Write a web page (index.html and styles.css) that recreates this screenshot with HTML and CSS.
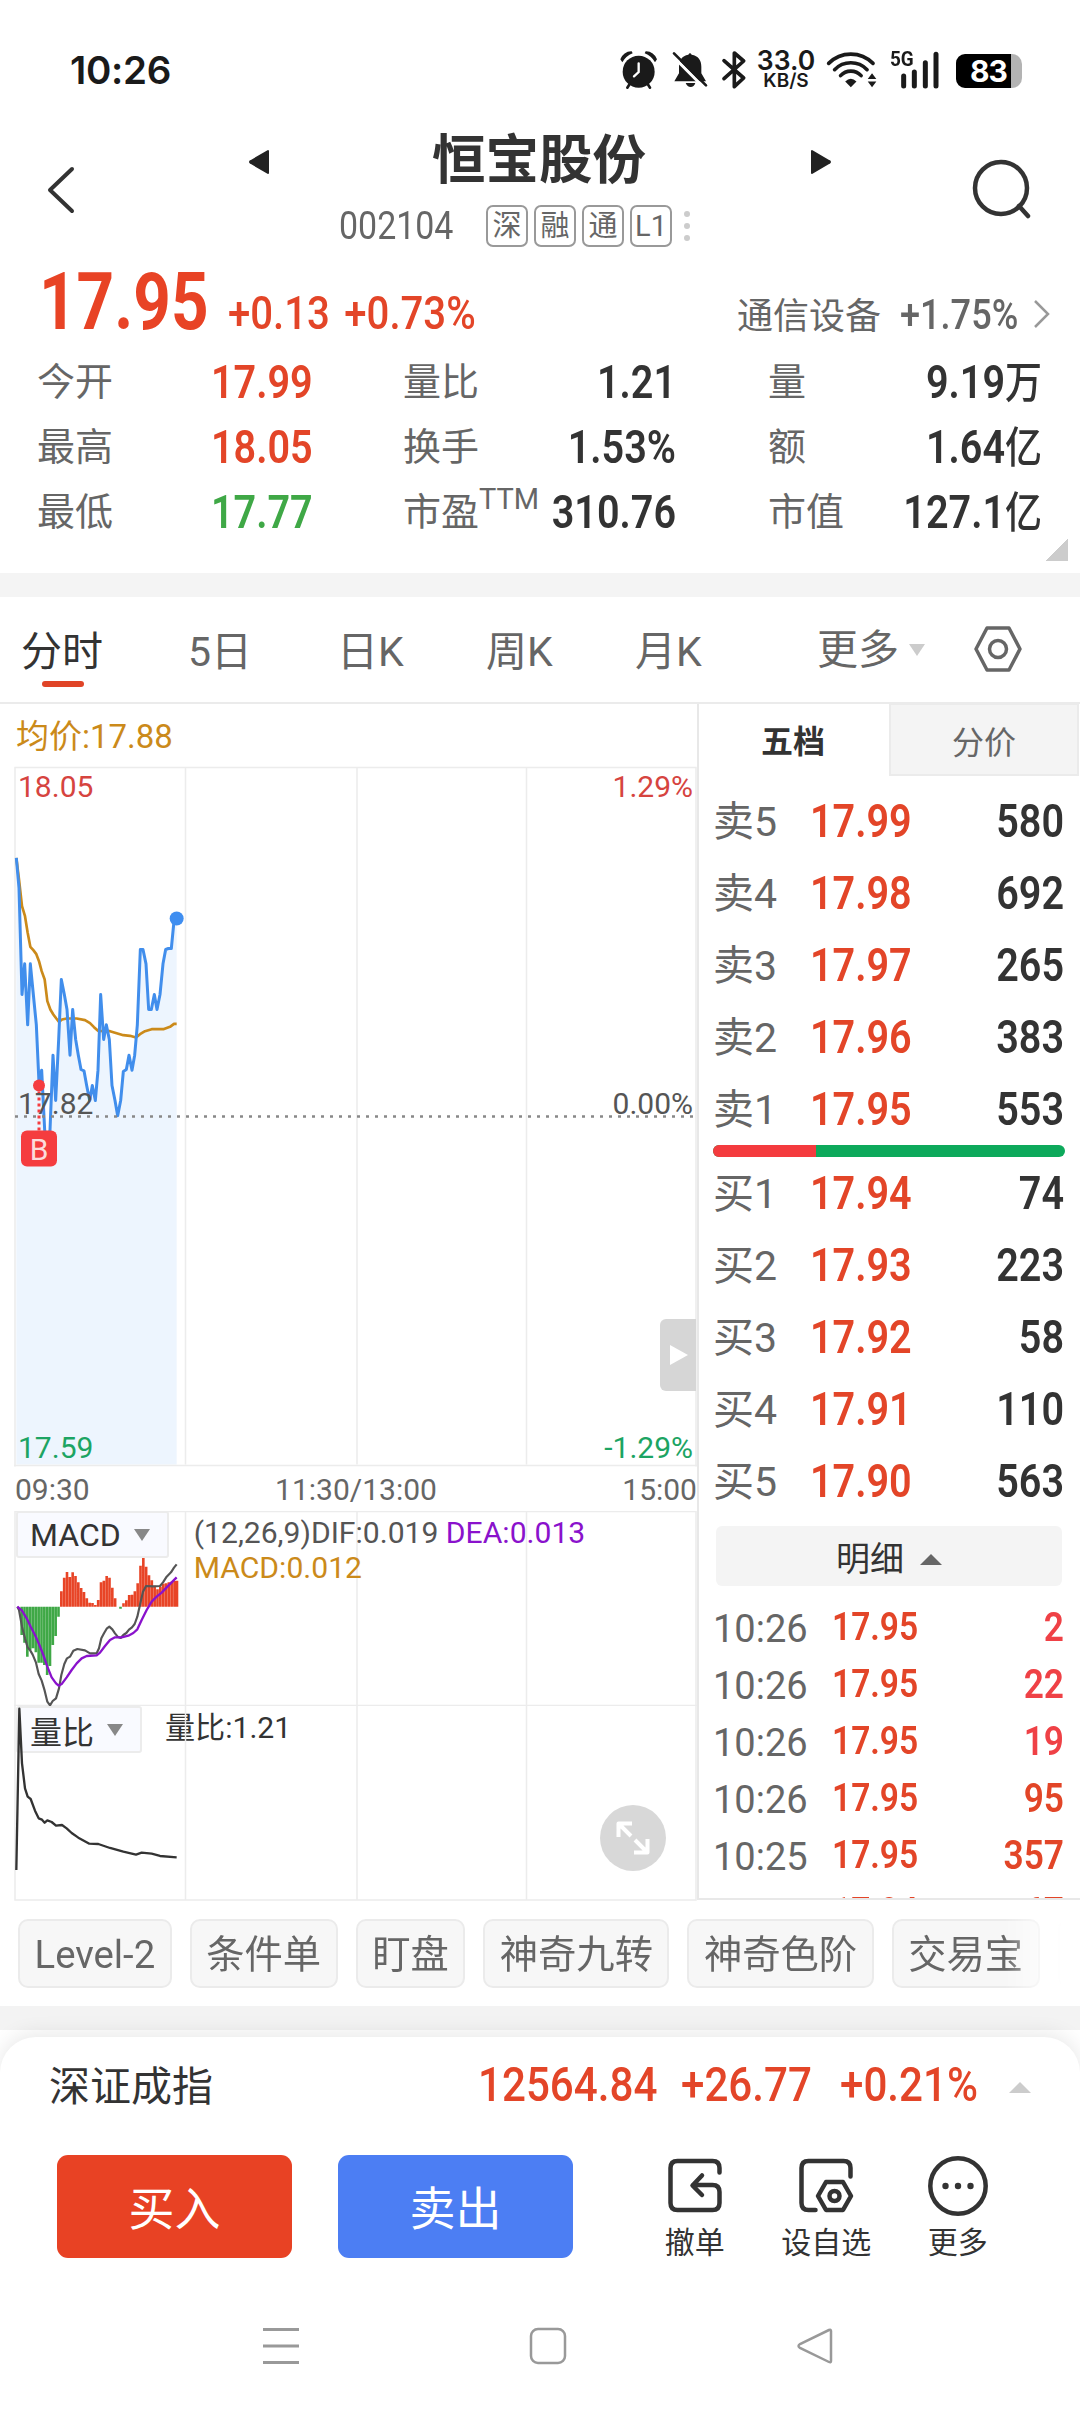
FILE: index.html
```html
<!DOCTYPE html>
<html lang="zh-CN">
<head>
    <meta charset="UTF-8">
    <meta name="viewport" content="width=device-width, initial-scale=1.0">
    <title>恒宝股份 002104</title>
    <link rel="stylesheet" href="styles.css">
</head>
<body>
    <!-- Status bar -->
    <div class="status-bar">
        <span class="clock">10:26</span>
        <div class="status-icons">
            <svg class="st-alarm" viewBox="24 27 120 123">
                <circle cx="83" cy="95" r="48"/>
                <path d="M28 58a34 34 0 0 1 34-24l3 6a62 62 0 0 0-31 27zM138 58a34 34 0 0 0-34-24l-3 6a62 62 0 0 1 31 27z"/>
                <path class="st-line" d="M56 132l-7 11M110 132l7 11"/>
                <path d="M83 70v26l-14 13" stroke="#fff" stroke-width="7" fill="none" stroke-linecap="round"/>
            </svg>
            <svg class="st-bell" viewBox="180 27 114 123">
                <path d="M232 44q5-8 10 0c20 3 29 17 29 36v20l14 24h-95l14-24V80c0-19 9-33 28-36z"/>
                <path d="M224 129h29q-4 12-14 12t-15-12z"/>
                <path d="M183 46l97 98" stroke="#fff" stroke-width="9"/>
                <path class="st-line" d="M189 40l96 96"/>
            </svg>
            <svg class="st-bt" viewBox="330 27 78 123">
                <path d="M339 62l59 52-28 26V39l28 24-59 53" fill="none" stroke="#1a1a1a" stroke-width="11" stroke-linejoin="round" stroke-linecap="round"/>
            </svg>
            <div class="net-speed"><b>33.0</b><span>KB/S</span></div>
            <svg class="st-wifi" viewBox="645 27 160 123">
                <g fill="none" stroke="#1a1a1a" stroke-width="11" stroke-linecap="round">
                    <path d="M656 70a94 94 0 0 1 134 0"/>
                    <path d="M674 89a68 68 0 0 1 98 0"/>
                    <path d="M692 107a42 42 0 0 1 62 0"/>
                </g>
                <path d="M706 125q17-17 34 0l-17 17z"/>
                <path d="M787 100l13 17h-26zM787 142l13-17h-26z"/>
            </svg>
            <div class="signal">
                <span>5G</span>
                <svg viewBox="840 27 150 123">
                    <path d="M881 108v30M913 96v42M946 68v70M978 43v95" stroke="#1a1a1a" stroke-width="15" stroke-linecap="round"/>
                </svg>
            </div>
            <div class="battery">83</div>
        </div>
    </div>

    <!-- Header -->
    <header class="header">
        <svg class="back" viewBox="0 0 30 50"><path d="M26 4L4 25l22 21" fill="none" stroke="#333" stroke-width="4" stroke-linecap="round" stroke-linejoin="round"/></svg>
        <svg class="prev" viewBox="0 0 22 26"><path d="M20 2v22L3 14q-2-1 0-2z" fill="#222" stroke="#222" stroke-width="2" stroke-linejoin="round"/></svg>
        <div class="title">
            <h1>恒宝股份</h1>
            <div class="code-row">
                <span class="num code">002104</span>
                <span class="tag">深</span>
                <span class="tag">融</span>
                <span class="tag">通</span>
                <span class="tag">L1</span>
                <span class="dots"><i></i><i></i><i></i></span>
            </div>
        </div>
        <svg class="next" viewBox="0 0 22 26"><path d="M2 2v22l17-10q2-1 0-2z" fill="#222" stroke="#222" stroke-width="2" stroke-linejoin="round"/></svg>
        <svg class="search" viewBox="0 0 60 62"><g fill="none" stroke="#333" stroke-width="4.5" stroke-linecap="round"><circle cx="29" cy="29" r="26"/><path d="M47 47l9 10"/></g></svg>
    </header>

    <!-- Quote -->
    <section class="quote">
        <div class="price-row">
            <span class="num last">17.95</span>
            <span class="num change">+0.13 +0.73%</span>
            <span class="sector">通信设备</span>
            <span class="num sector-change">+1.75%</span>
            <svg class="chev" viewBox="0 0 18 30"><path d="M2 2l13 13L2 28" fill="none" stroke="#999" stroke-width="2.5"/></svg>
        </div>
        <div class="stats">
            <span>今开</span><b class="num up">17.99</b>
            <span>量比</span><b class="num">1.21</b>
            <span>量</span><b class="num">9.19<em>万</em></b>
            <span>最高</span><b class="num up">18.05</b>
            <span>换手</span><b class="num">1.53%</b>
            <span>额</span><b class="num">1.64<em>亿</em></b>
            <span>最低</span><b class="num down">17.77</b>
            <span>市盈<sup>TTM</sup></span><b class="num">310.76</b>
            <span>市值</span><b class="num">127.1<em>亿</em></b>
        </div>
        <i class="corner"></i>
    </section>

    <!-- Period tabs -->
    <nav class="periods">
        <a class="active">分时</a>
        <a>5日</a>
        <a>日K</a>
        <a>周K</a>
        <a>月K</a>
        <a class="more">更多<i class="tri-down"></i></a>
        <svg class="setting" viewBox="0 0 48 46"><g fill="none" stroke="#666" stroke-width="3.5" stroke-linejoin="round"><path d="M13 2h22l11 21-11 21H13L2 23z"/><circle cx="24" cy="23" r="8.5"/></g></svg>
    </nav>

    <main class="board">
        <!-- Charts -->
        <div class="charts">
            <div class="avg">均价:17.88</div>
            <div class="panel panel-price">
                <svg viewBox="0 0 697 700">
                    <path class="grid" d="M15 700V1H696V700M185.500 1V698M357 1V698M526.500 1V698"/>
                    <g transform="translate(0 33) scale(.33333)">
                        <path fill="#edf5fe" d="M49 175L57 265 66 585 74 493 83 676 91 493 100 585 109 676 117 850 125 812 134 992 142 1020 150 992 159 767 167 903 176 720 184 540 193 585 201 630 210 767 218 630 227 720 235 767 243 810 252 814 260 858 269 903 277 858 286 903 294 812 302 585 311 720 319 676 328 720 336 858 345 903 353 949 362 903 370 816 379 810 387 767 396 812 404 767 412 676 421 450 429 450 438 493 446 630 454 630 463 585 471 630 480 585 489 493 497 450 505 447 514 447 521 375 530 357V1995H49z"/>
                        <polyline class="line avg-line" points="49,175 57,240 66,320 75,350 83,400 91,442 100,452 109,464 117,485 125,515 134,540 142,605 151,630 160,645 169,657 177,667 186,660 200,657 230,657 255,662 270,671 282,683 294,694 330,695 350,701 370,707 390,709 408,714 420,704 435,695 455,689 490,689 510,682 522,673 530,673"/>
                        <polyline class="line price-line" points="49,175 57,265 66,585 74,493 83,676 91,493 100,585 109,676 117,850 125,812 134,992 142,1020 150,992 159,767 167,903 176,720 184,540 193,585 201,630 210,767 218,630 227,720 235,767 243,810 252,814 260,858 269,903 277,858 286,903 294,812 302,585 311,720 319,676 328,720 336,858 345,903 353,949 362,903 370,816 379,810 387,767 396,812 404,767 412,676 421,450 429,450 438,493 446,630 454,630 463,585 471,630 480,585 489,493 497,450 505,447 514,447 521,375 530,357"/>
                        <circle cx="530" cy="357" r="21" fill="#3f8ef0"/>
                    </g>
                    <path class="zero" d="M15 350H696"/>
                    <path class="grid base" d="M14 699H697"/>
                    <path d="M39 325V364" stroke="#f53c3f" stroke-width="3" stroke-dasharray="3 3"/>
                    <circle cx="39" cy="319" r="6" fill="#f53c3f"/>
                    <rect x="21" y="364" width="36" height="36" rx="6" fill="#f53c3f"/>
                    <text class="buy-mark" x="39" y="393.500">B</text>
                    <text class="red" x="18" y="30">18.05</text>
                    <text class="red" x="693" y="30" text-anchor="end">1.29%</text>
                    <text x="18" y="347">17.82</text>
                    <text x="693" y="347" text-anchor="end">0.00%</text>
                    <text class="green" x="18" y="691">17.59</text>
                    <text class="green" x="693" y="691" text-anchor="end">-1.29%</text>
                </svg>
                <button class="side-toggle"><i></i></button>
            </div>
            <div class="time-axis"><span>09:30</span><span>11:30/13:00</span><span>15:00</span></div>
            <div class="panel panel-macd">
                <svg viewBox="0 0 697 195">
                    <path class="grid" d="M15 195V.500H696V195M185.500 0V194M357 0V194M526.500 0V194M14 194.500H697"/>
                    <g transform="translate(0 -91) scale(.33333)">
                        <path stroke="#3fa846" stroke-width="7.800" d="M65 560V645M73.500 560V668M82 560V710M90.500 560V690M99 560V685M107.500 560V697M116 560V728M124.500 560V728M133 560V735M141.500 560V765M150 560V738M158.500 560V675M167 560V648M175.500 560V590M361.500 560V566"/>
                        <path stroke="#e84426" stroke-width="7.800" d="M184 560V514M192.500 560V473M201 560V456M209.500 560V471M218 560V457M226.500 560V468M235 560V487M243.500 560V504M252 560V516M260.500 560V535M269 560V548M277.500 560V549M286 560V555M294.500 560V540M303 560V487M311.500 560V482M320 560V468M328.500 560V473M337 560V503M345.500 560V535M370.500 560V550M379 560V541M387.500 560V525M396 560V524M404.500 560V514M413 560V490M421.500 560V437M430 560V409M438.500 560V440M447 560V466M455.500 560V481M464 560V497M472.500 560V508M481 560V500M489.500 560V491M498 560V490M506.500 560V487M515 560V485M523.500 560V483M531 560V482"/>
                        <polyline class="line dif-line" points="52,560 57,570 66,620 75,655 83,682 91,692 98,704 108,728 116,762 125,782 134,812 142,845 150,856 158,843 168,835 177,805 184,765 193,732 201,715 210,710 220,692 232,687 255,691 270,700 290,700 297,685 304,655 312,640 320,626 328,620 337,628 345,640 353,650 362,654 370,645 379,639 387,629 396,622 404,612 412,590 421,550 429,515 438,498 460,499 480,498 489,487 500,470 513,457 522,443 530,433"/>
                        <polyline class="line dea-line" points="52,560 66,572 80,595 92,620 105,645 117,672 130,705 142,740 155,772 168,790 176,797 186,791 200,772 215,750 230,730 245,715 260,708 290,706 300,698 315,678 330,660 345,652 365,652 385,647 400,639 412,628 425,600 440,570 455,545 470,530 485,518 500,502 515,487 530,472"/>
                    </g>
                </svg>
                <div class="indicator">
                    <button class="picker">MACD<i class="tri-down"></i></button>
                    <p>(12,26,9)DIF:0.019 <span class="dea">DEA:0.013</span><br><span class="gold">MACD:0.012</span></p>
                </div>
            </div>
            <div class="panel panel-ratio">
                <div class="indicator">
                    <button class="picker">量比<i class="tri-down"></i></button>
                    <p>量比:1.21</p>
                </div>
                <svg viewBox="0 0 697 195">
                    <path class="grid" d="M15 0V194H696V0M185.500 0V194M357 0V194M526.500 0V194"/>
                    <polyline class="line ratio-line" transform="translate(0 -286) scale(.33333)" points="49,1350 58,866 66,1030 75,1105 83,1130 92,1137 105,1172 116,1195 126,1199 134,1208 142,1201 155,1206 168,1217 186,1215 200,1225 215,1239 235,1253 268,1271 295,1272 330,1284 370,1295 408,1304 425,1298 455,1301 480,1308 530,1312"/>
                </svg>
                <button class="expand">
                    <svg viewBox="0 0 66 66"><g fill="none" stroke="#fff" stroke-width="4" stroke-linejoin="round"><path d="M31 31L18 18M18.500 32V18.500H32M35 35L48 48M47.500 34V47.500H34"/></g></svg>
                </button>
            </div>
        </div>

        <!-- Order book -->
        <aside class="book">
            <div class="book-tabs"><a class="active">五档</a><a>分价</a></div>
            <ul class="levels">
                <li><span>卖5</span><b class="num">17.99</b><b class="num">580</b></li>
                <li><span>卖4</span><b class="num">17.98</b><b class="num">692</b></li>
                <li><span>卖3</span><b class="num">17.97</b><b class="num">265</b></li>
                <li><span>卖2</span><b class="num">17.96</b><b class="num">383</b></li>
                <li><span>卖1</span><b class="num">17.95</b><b class="num">553</b></li>
            </ul>
            <div class="ratio-bar"><i></i></div>
            <ul class="levels">
                <li><span>买1</span><b class="num">17.94</b><b class="num">74</b></li>
                <li><span>买2</span><b class="num">17.93</b><b class="num">223</b></li>
                <li><span>买3</span><b class="num">17.92</b><b class="num">58</b></li>
                <li><span>买4</span><b class="num">17.91</b><b class="num">110</b></li>
                <li><span>买5</span><b class="num">17.90</b><b class="num">563</b></li>
            </ul>
            <button class="detail-btn">明细<i class="tri-up"></i></button>
            <ul class="ticks">
                <li><span>10:26</span><b class="num">17.95</b><b class="num">2</b></li>
                <li><span>10:26</span><b class="num">17.95</b><b class="num">22</b></li>
                <li><span>10:26</span><b class="num">17.95</b><b class="num">19</b></li>
                <li><span>10:26</span><b class="num">17.95</b><b class="num big">95</b></li>
                <li><span>10:25</span><b class="num">17.95</b><b class="num big">357</b></li>
                <li><span>10:25</span><b class="num">17.94</b><b class="num big">67</b></li>
            </ul>
        </aside>
    </main>

    <!-- Shortcuts -->
    <div class="chips">
        <a>Level-2</a><a>条件单</a><a>盯盘</a><a>神奇九转</a><a>神奇色阶</a><a>交易宝</a><a></a>
    </div>

    <!-- Bottom sheet -->
    <footer class="sheet">
        <div class="index-row">
            <span>深证成指</span>
            <span class="num index-val">12564.84</span>
            <span class="num index-chg">+26.77</span>
            <span class="num index-pct">+0.21%</span>
            <i class="tri-up"></i>
        </div>
        <div class="actions">
            <button class="trade buy">买入</button>
            <button class="trade sell">卖出</button>
            <a class="tool">
                <svg viewBox="0 0 60 60"><g fill="none" stroke="#333" stroke-width="4.500" stroke-linecap="round" stroke-linejoin="round"><path d="M54.500 16.500V12q0-7-7-7h-35q-7 0-7 7v35q0 7 7 7h35q7 0 7-7V36q0-7-7-7H28M37 19.500L27.500 29.500 37 39"/></g></svg>
                撤单
            </a>
            <a class="tool">
                <svg viewBox="0 0 60 60"><g fill="none" stroke="#333" stroke-width="4.500" stroke-linecap="round" stroke-linejoin="round"><path d="M54.500 20.500V12q0-7-7-7h-35q-7 0-7 7v35q0 7 7 7h7M30 26h17l8 14-8 14H30l-8-14z"/><circle cx="38.500" cy="40" r="5"/></g></svg>
                设自选
            </a>
            <a class="tool">
                <svg viewBox="0 0 60 60"><circle cx="30" cy="30" r="27.700" fill="none" stroke="#333" stroke-width="4.500"/><g fill="#333"><circle cx="17.500" cy="30" r="3.200"/><circle cx="30" cy="30" r="3.200"/><circle cx="42.500" cy="30" r="3.200"/></g></svg>
                更多
            </a>
        </div>
        <div class="nav-bar">
            <svg viewBox="0 0 40 40"><path d="M2 3.500H38M2 20H38M2 36.500H38" stroke="#999" stroke-width="3"/></svg>
            <svg viewBox="0 0 40 40"><rect x="3" y="3" width="34" height="34" rx="7" fill="none" stroke="#999" stroke-width="2.500"/></svg>
            <svg viewBox="0 0 40 40"><path d="M36 5v30q0 2-2 1L5 22q-3-2 0-4L34 4q2-1 2 1z" fill="none" stroke="#999" stroke-width="2.500"/></svg>
        </div>
    </footer>
</body>
</html>
```
FILE: styles.css
```css
* {
    box-sizing: border-box;
}

body {
    width: 1080px;
    height: 2412px;
    margin: 0;
    overflow: hidden;
    background: #fff;
    color: #333;
    font-family: Roboto, "Noto Sans CJK SC", sans-serif;
}

button {
    padding: 0;
    border: none;
    font-family: inherit;
    color: inherit;
}

ul {
    list-style: none;
    margin: 0;
    padding: 0;
}

svg {
    display: block;
    flex: none;
}

/* narrow figures */
.num {
    display: inline-block;
    transform: scaleX(.86);
    transform-origin: left center;
    white-space: nowrap;
    font-weight: 500;
}

.up {
    color: #e34528;
}

.down {
    color: #3fa846;
}

.tri-down {
    width: 0;
    border: 8.5px solid transparent;
    border-top: 12px solid #ccc;
    border-bottom: none;
}

.tri-up {
    width: 0;
    border: 11px solid transparent;
    border-bottom: 11px solid #ccc;
    border-top: none;
}

/* status bar */
.status-bar {
    display: flex;
    justify-content: space-between;
    height: 110px;
    padding: 0 58px 0 70px;
}

.clock {
    padding-top: 50px;
    font: 600 38.5px/40px Inter, sans-serif;
    letter-spacing: -.3px;
    color: #1a1a1a;
}

.status-icons {
    display: flex;
    align-items: flex-start;
    padding-top: 49px;
    fill: #1a1a1a;
    color: #1a1a1a;
}

.st-line {
    stroke: #1a1a1a;
    stroke-width: 8;
    stroke-linecap: round;
}

.st-alarm {
    width: 40px;
    height: 41px;
}

.st-bell {
    width: 38px;
    height: 41px;
    margin-left: 12px;
}

.st-bt {
    width: 26px;
    height: 41px;
    margin-left: 12px;
}

.net-speed {
    display: flex;
    flex-direction: column;
    align-items: center;
    width: 62px;
    margin-left: 8px;
    font-family: Inter, sans-serif;
}

.net-speed b {
    font-size: 26.5px;
    font-weight: 600;
    line-height: 23px;
}

.net-speed span {
    font-size: 19px;
    font-weight: 600;
    line-height: 17px;
}

.st-wifi {
    width: 53px;
    height: 41px;
    margin-left: 8px;
}

.signal {
    position: relative;
    margin-left: 12px;
}

.signal svg {
    width: 50px;
    height: 41px;
}

.signal span {
    position: absolute;
    left: 0;
    top: 0;
    font-size: 21px;
    font-weight: 700;
    line-height: 20px;
    transform: scaleX(.9);
    transform-origin: left;
}

.battery {
    width: 66px;
    height: 34px;
    margin: 5px 0 0 16px;
    padding-right: 1px;
    border-radius: 9px 10px 10px 9px;
    background: linear-gradient(90deg, #000 55px, #b3b3b3 55px);
    color: #fff;
    text-align: center;
    font: 700 30px/35px Inter, sans-serif;
    letter-spacing: -1px;
}

/* header */
.header {
    display: flex;
    height: 150px;
}

.back {
    width: 30px;
    height: 50px;
    margin: 55px 0 0 46px;
}

.prev, .next {
    width: 22px;
    height: 26px;
    margin-top: 39px;
}

.prev {
    margin-left: 172px;
}

.title {
    width: 540px;
    text-align: center;
}

.title h1 {
    margin: 21px 0 0 -2px;
    font-size: 53.5px;
    font-weight: 700;
    line-height: 60px;
}

.code-row {
    display: flex;
    align-items: center;
    height: 42px;
    margin-top: 14px;
    padding-left: 69px;
}

.code {
    width: 147px;
    font-size: 39px;
    font-weight: 400;
    color: #666;
    text-align: left;
    transform: scaleX(.87);
}

.tag {
    width: 42px;
    height: 42px;
    margin-right: 6px;
    border: 2px solid #999;
    border-radius: 7px;
    font-size: 29px;
    line-height: 38px;
    color: #666;
}

.dots {
    display: grid;
    gap: 6px;
    margin-left: 6px;
}

.dots i {
    width: 6px;
    height: 6px;
    border-radius: 50%;
    background: #ccc;
}

.search {
    width: 60px;
    height: 62px;
    margin: 49px 0 0 140px;
}

/* quote */
.quote {
    position: relative;
    height: 313px;
}

.price-row {
    display: flex;
    align-items: baseline;
    height: 90px;
    line-height: 84px;
    padding-left: 39px;
}

.last {
    width: 189px;
    font-size: 79px;
    font-weight: 700;
    color: #e84325;
    transform: scaleX(.83);
}

.change {
    width: 509px;
    font-size: 46px;
    color: #e34528;
    word-spacing: 5px;
    transform: scaleX(.873);
}

.sector {
    width: 163px;
    font-size: 36px;
    color: #666;
}

.sector-change {
    width: 133px;
    font-size: 42px;
    color: #666;
}

.chev {
    width: 18px;
    height: 30px;
    align-self: center;
    margin-top: 18px;
}

.stats {
    display: grid;
    grid-template-columns: 174px 192px 110px 255px 96px 178px;
    grid-auto-rows: 65px;
    padding-left: 37px;
    line-height: 65px;
}

.stats span {
    font-size: 38px;
    color: #666;
    white-space: nowrap;
}

.stats sup {
    font-size: 29px;
    line-height: 1;
    vertical-align: 16px;
}

.stats b {
    font-size: 46px;
    font-weight: 600;
    text-align: right;
    transform-origin: right center;
}

.stats b:nth-child(6n + 4) {
    margin-right: 92px;
}

.stats b.up, .stats b.down {
    text-align: left;
    transform-origin: left center;
}

.stats em {
    font-size: 43px;
    font-style: normal;
    font-weight: 500;
}

.corner {
    position: absolute;
    right: 12px;
    bottom: 12px;
    width: 22px;
    height: 22px;
    background: linear-gradient(135deg, transparent 50%, #ccc 50%);
}

/* period tabs */
.periods {
    display: flex;
    height: 131px;
    padding-left: 21px;
    border-top: 24px solid #f4f4f4;
    border-bottom: 2px solid #ebebeb;
    font-size: 41px;
    line-height: 110px;
    color: #666;
}

.periods a {
    position: relative;
    width: 149px;
}

.periods a:first-child {
    width: 167px;
}

.periods .active {
    color: #333;
}

.periods .active::after {
    content: "";
    position: absolute;
    left: 21px;
    bottom: 15px;
    width: 42px;
    height: 6px;
    border-radius: 3px;
    background: #e04427;
}

.periods .more {
    display: flex;
    align-items: center;
    gap: 10px;
    width: 157px;
    margin-left: 33px;
}

.setting {
    width: 48px;
    height: 46px;
    margin-top: 29px;
}

/* board */
.board {
    display: flex;
    height: 1196px;
    margin-bottom: 1px;
}

.charts {
    width: 697px;
}

.avg {
    height: 62px;
    padding-left: 16px;
    font-size: 33px;
    line-height: 66px;
    color: #cb8a1a;
}

.panel {
    position: relative;
}

.panel > svg {
    width: 697px;
    height: 100%;
}

.panel-price {
    height: 701px;
}

.panel-macd, .panel-ratio {
    height: 195px;
}

.panel text {
    font-size: 30px;
    fill: #555;
}

.panel .red {
    fill: #d6443f;
}

.panel .green {
    fill: #1ca463;
}

.panel .buy-mark {
    fill: #fbdcdc;
    text-anchor: middle;
}

.grid {
    fill: none;
    stroke: #ececec;
    stroke-width: 1.5;
}

.zero {
    stroke: #888;
    stroke-width: 2.6;
    stroke-dasharray: 3 6;
}

.line {
    fill: none;
    stroke-width: 8;
    stroke-linejoin: round;
}

.avg-line {
    stroke: #cb8a1a;
}

.price-line {
    stroke: #418eec;
    stroke-width: 9;
}

.dif-line {
    stroke: #555;
    stroke-width: 6.5;
}

.dea-line {
    stroke: #8a12cc;
    stroke-width: 7;
}

.ratio-line {
    stroke: #333;
    stroke-width: 7;
}

.side-toggle {
    position: absolute;
    right: 1px;
    top: 553px;
    width: 36px;
    height: 72px;
    padding-left: 10px;
    border-radius: 6px 0 0 6px;
    background: #d6d6d6;
}

.side-toggle i {
    display: block;
    width: 0;
    border: 10.5px solid transparent;
    border-left: 18px solid #fff;
    border-right: none;
}

.time-axis {
    display: flex;
    justify-content: space-between;
    height: 44px;
    padding: 0 0 0 15px;
    font-size: 30px;
    line-height: 46px;
    color: #666;
}

.indicator {
    position: absolute;
    left: 16px;
    top: 0;
    display: flex;
    align-items: flex-start;
}

.picker {
    display: flex;
    align-items: center;
    gap: 13px;
    height: 47px;
    padding: 1px 17px 0 12px;
    border: 2px solid #ececec;
    border-radius: 3px;
    background: #f9faff;
    font-size: 32px;
}

.picker .tri-down {
    border-top-color: #888;
}

.indicator p {
    margin: 4px 0 0 25px;
    font-size: 30.1px;
    line-height: 35px;
    color: #555;
}

.panel-ratio > svg {
    position: relative;
}

.panel-ratio p {
    margin-left: 23px;
    color: #333;
}

.dea {
    color: #8a12cc;
}

.gold {
    color: #cb8a1a;
}

.expand {
    position: absolute;
    left: 600px;
    top: 99px;
    width: 66px;
    height: 66px;
    border-radius: 50%;
    background: #d8d8d8;
}

/* order book */
.book {
    width: 383px;
    height: 1196px;
    border-left: 2px solid #e8e8e8;
    border-bottom: 2px solid #e8e8e8;
    overflow: hidden;
}

.book-tabs {
    display: flex;
    height: 72px;
    text-align: center;
    font-size: 32px;
    line-height: 76px;
}

.book-tabs a {
    width: 190px;
    border: 2px solid #ebebeb;
    border-top: 1px solid #ebebeb;
    background: #f4f4f4;
    color: #666;
}

.book-tabs .active {
    padding-right: 2px;
    border: none;
    background: none;
    color: #333;
    font-weight: 700;
}

.levels {
    padding: 9px 16px 0 14px;
}

.levels li {
    display: grid;
    grid-template-columns: 97px 120px 1fr;
    height: 72px;
    line-height: 73px;
    font-size: 46px;
}

.levels span {
    font-size: 41px;
    line-height: 75px;
    color: #666;
}

.levels b, .ticks b {
    font-weight: 600;
    color: #e34528;
}

.levels b:last-child, .ticks b:last-child {
    text-align: right;
    transform-origin: right center;
}

.levels b:last-child {
    color: #333;
}

.ratio-bar {
    height: 12px;
    margin: 0 15px 0 14px;
    border-radius: 6px;
    background: #0da95b;
    overflow: hidden;
}

.ratio-bar i {
    display: block;
    width: 103px;
    height: 12px;
    background: #f43b3e;
}

.ratio-bar + .levels {
    padding-top: 0;
}

.detail-btn {
    display: flex;
    align-items: center;
    justify-content: center;
    gap: 16px;
    width: 346px;
    height: 60px;
    margin: 9px 0 0 17px;
    border-radius: 6px;
    background: #f4f4f4;
    font-size: 34px;
}

.detail-btn .tri-up {
    border-bottom-color: #666;
    margin-top: 7px;
}

.ticks {
    padding: 13px 16px 0 14px;
}

.ticks li {
    display: grid;
    grid-template-columns: 119px 100px 1fr;
    height: 57px;
    line-height: 57px;
    font-size: 39px;
}

.ticks span {
    font-size: 38px;
    line-height: 60px;
    color: #666;
}

.ticks b:last-child {
    font-size: 41px;
    color: #ef4146;
}

.ticks .big:last-child {
    color: #e24527;
}

/* shortcuts */
.chips {
    display: flex;
    gap: 18px;
    width: 1062px;
    height: 105px;
    padding: 18px 0 0 18px;
    overflow: hidden;
    -webkit-mask-image: linear-gradient(90deg, #000 1005px, transparent 1062px);
    mask-image: linear-gradient(90deg, #000 1005px, transparent 1062px);
}

.chips a {
    flex: none;
    height: 69px;
    padding: 0 14.5px;
    border: 2px solid #ebebeb;
    border-radius: 10px;
    background: #f7f7f7;
    font-size: 38.3px;
    line-height: 68px;
    color: #666;
}

/* bottom sheet */
.sheet {
    position: relative;
    margin-top: 31px;
    height: 375px;
    border-radius: 36px 36px 0 0;
    background: #fff;
    box-shadow: 0 -4px 20px rgba(0, 0, 0, .09);
}

.chips + .sheet::before {
    content: "";
    position: absolute;
    z-index: -1;
    left: 0;
    top: -31px;
    width: 1080px;
    height: 24px;
    background: #f3f3f3;
}

.index-row {
    display: flex;
    align-items: center;
    height: 100px;
    padding-left: 49px;
    font-size: 41px;
    line-height: 100px;
}

.index-row .num {
    font-size: 49px;
    line-height: 96px;
    color: #e34528;
    margin-top: -4px;
}

.index-row span:first-child {
    width: 429px;
}

.index-val {
    width: 203px;
}

.index-chg {
    width: 159px;
}

.index-pct {
    width: 169px;
}

.actions {
    display: flex;
    padding: 18px 0 0 57px;
}

.trade {
    width: 235px;
    height: 103px;
    margin-right: 46px;
    padding-bottom: 4px;
    border-radius: 11px;
    font-size: 46px;
    color: #fff;
}

.buy {
    background: #e84224;
}

.sell {
    margin-right: 56px;
    background: #4c7ef3;
}

.tool {
    width: 131.500px;
    text-align: center;
    font-size: 30px;
    line-height: 54px;
}

.tool svg {
    width: 60px;
    height: 60px;
    margin: 1px auto 0;
}

.nav-bar {
    display: flex;
    gap: 227px;
    padding: 56px 0 0 261px;
}

.nav-bar svg {
    width: 40px;
    height: 40px;
}
```
